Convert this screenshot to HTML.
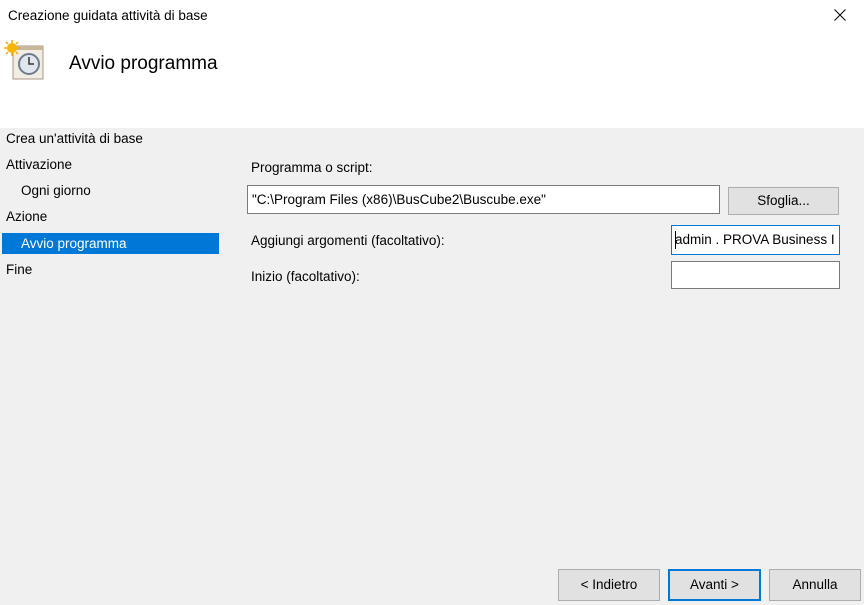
<!DOCTYPE html>
<html><head><style>
body{margin:0;width:864px;height:605px;background:#f0f0f0;font-family:"Liberation Sans",sans-serif;font-size:13.5px;color:#000;position:relative;overflow:hidden}
.a{position:absolute;white-space:nowrap}
.top{position:absolute;left:0;top:0;width:864px;height:128px;background:#fff}
.inp{position:absolute;background:#fff;border:1px solid #7a7a7a;box-sizing:border-box}
.btn{position:absolute;background:#e1e1e1;border:1px solid #adadad;box-sizing:border-box;text-align:center;font-size:13.5px}
</style></head><body>
<div class="top"></div>
<div class="a" style="left:8px;top:8px;font-size:13.5px">Creazione guidata attività di base</div>
<svg class="a" style="left:834px;top:9px" width="12" height="12" viewBox="0 0 12 12"><path d="M0.5 0.5L11.5 11.5M11.5 0.5L0.5 11.5" stroke="#000" stroke-width="1"/></svg>
<svg class="a" style="left:4px;top:40px" width="42" height="42" viewBox="0 0 42 42">
<rect x="9" y="6" width="30" height="33" fill="#f2ede4" stroke="#a89a85"/>
<rect x="9" y="6" width="30" height="4" fill="#c9b79a"/>
<circle cx="25" cy="24" r="10" fill="#dfe6ee" stroke="#6e7d8c" stroke-width="2"/>
<path d="M25 17v7h5" stroke="#333" stroke-width="1.5" fill="none"/>
<circle cx="8" cy="8" r="5" fill="#f7b500"/>
<path d="M8 0v3M8 13v3M0 8h3M13 8h3M2 2l2 2M12 12l2 2M2 14l2-2M12 4l2-2" stroke="#f7a800" stroke-width="1.5"/>
</svg>
<div class="a" style="left:69px;top:53px;font-size:19px">Avvio programma</div>
<div class="a" style="left:6px;top:131px">Crea un'attività di base</div>
<div class="a" style="left:6px;top:157px">Attivazione</div>
<div class="a" style="left:21px;top:183px">Ogni giorno</div>
<div class="a" style="left:6px;top:209px">Azione</div>
<div class="a" style="left:2px;top:233px;width:217px;height:21px;background:#0078d7"></div>
<div class="a" style="left:21px;top:236px;color:#fff">Avvio programma</div>
<div class="a" style="left:6px;top:262px">Fine</div>
<div class="a" style="left:251px;top:160px">Programma o script:</div>
<div class="inp" style="left:247px;top:185px;width:473px;height:29px"></div>
<div class="a" style="left:252px;top:192px">"C:\Program Files (x86)\BusCube2\Buscube.exe"</div>
<div class="btn" style="left:728px;top:187px;width:111px;height:28px;line-height:26px">Sfoglia...</div>
<div class="a" style="left:251px;top:233px">Aggiungi argomenti (facoltativo):</div>
<div class="inp" style="left:671px;top:225px;width:169px;height:30px;border-color:#0078d7;overflow:hidden"><span class="a" style="left:3px;top:6px">admin . PROVA Business I</span><span class="a" style="left:3px;top:5px;width:1px;height:18px;background:#000"></span></div>
<div class="a" style="left:251px;top:269px">Inizio (facoltativo):</div>
<div class="inp" style="left:671px;top:261px;width:169px;height:28px"></div>
<div class="btn" style="left:558px;top:569px;width:102px;height:32px;line-height:30px">&lt; Indietro</div>
<div class="btn" style="left:668px;top:569px;width:93px;height:32px;line-height:28px;border:2px solid #0078d7">Avanti &gt;</div>
<div class="btn" style="left:769px;top:569px;width:92px;height:32px;line-height:30px">Annulla</div>
</body></html>
